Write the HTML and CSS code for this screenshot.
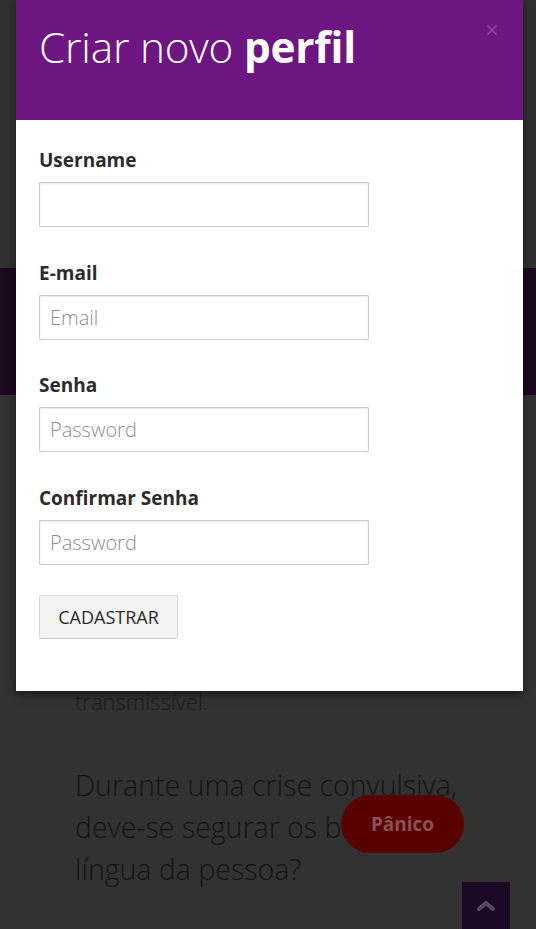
FILE: index.html
```html
<!DOCTYPE html>
<html lang="pt">
<head>
<meta charset="utf-8">
<title>Criar novo perfil</title>
<link rel="stylesheet" href="styles.css">
</head>
<body>
<div class="page">
  <div class="topbar"></div>
  <div class="band"></div>
  <section class="content">
    <p class="answer">transmissível.</p>
    <h3 class="question">Durante uma crise convulsiva, deve-se segurar os braços e a língua da pessoa?</h3>
  </section>
</div>

<button class="panic" type="button">Pânico</button>
<a class="to-top" href="#">
  <svg width="22" height="14" viewBox="0 0 22 14"><path d="M4 11 L11 5 L18 11" fill="none" stroke="#5a4a60" stroke-width="4" stroke-linecap="round" stroke-linejoin="round"/></svg>
</a>

<div class="modal">
  <div class="modal-header">
    <h2 class="modal-title">Criar novo <strong>perfil</strong></h2>
    <button class="close" type="button" aria-label="Fechar">
      <svg width="12" height="12" viewBox="0 0 12 12"><path d="M1.5 1.5 L10.5 10.5 M10.5 1.5 L1.5 10.5" stroke="#8c4c9b" stroke-width="1.5"/></svg>
    </button>
  </div>
  <form class="modal-body">
    <div class="group">
      <label class="label">Username</label>
      <input class="field" type="text">
    </div>
    <div class="group">
      <label class="label">E-mail</label>
      <input class="field" type="email" placeholder="Email">
    </div>
    <div class="group">
      <label class="label">Senha</label>
      <input class="field" type="password" placeholder="Password">
    </div>
    <div class="group">
      <label class="label">Confirmar Senha</label>
      <input class="field" type="password" placeholder="Password">
    </div>
    <button class="submit" type="button">CADASTRAR</button>
  </form>
</div>
</body>
</html>
```

FILE: styles.css
```css
* { box-sizing: border-box; }
html, body {
  margin: 0;
  padding: 0;
  height: 100%;
  overflow: hidden;
}
body {
  background: #323232;
  font-family: "Open Sans", "Liberation Sans", sans-serif;
  position: relative;
}
.page {
  display: flex;
  flex-direction: column;
}
.topbar {
  height: 268px;
  background: #313131;
}
.band {
  height: 127px;
  background: #1b0a1e;
}
.content {
  padding: 0 60px 0 75px;
  color: #1c1c1c;
}
.answer {
  margin: 291px 0 0;
  font-size: 22px;
  font-weight: 300;
  line-height: 30px;
}
.question {
  margin: 48px 0 0;
  font-size: 28.5px;
  font-weight: 300;
  line-height: 42px;
  color: #151515;
}

.panic {
  position: absolute;
  left: 341px;
  top: 795px;
  width: 123px;
  height: 58px;
  border: none;
  border-radius: 29px;
  background: #590202;
  color: #8a5252;
  font-family: "Open Sans", "Liberation Sans", sans-serif;
  font-weight: 700;
  font-size: 19px;
  padding: 0;
}
.to-top {
  position: absolute;
  left: 462px;
  top: 882px;
  width: 48px;
  height: 52px;
  background: #1c0923;
  display: flex;
  justify-content: center;
  padding-top: 16px;
}

.modal {
  position: absolute;
  left: 16px;
  top: 0;
  width: 507px;
  height: 691px;
  background: #fff;
  box-shadow: 0 3px 8px rgba(0, 0, 0, 0.55);
}
.modal-header {
  height: 120px;
  background: #6d1580;
  position: relative;
  padding: 19px 23px 0;
}
.modal-title {
  margin: 0;
  color: #fff;
  font-size: 42.3px;
  font-weight: 300;
  line-height: 56px;
  letter-spacing: -0.2px;
}
.modal-title strong {
  font-weight: 700;
}
.close {
  position: absolute;
  top: 23px;
  right: 24px;
  width: 14px;
  height: 14px;
  padding: 0;
  border: none;
  background: transparent;
  display: flex;
  align-items: center;
  justify-content: center;
}
.modal-body {
  display: flex;
  flex-direction: column;
  align-items: flex-start;
  padding: 27px 23px 0;
}
.group {
  display: flex;
  flex-direction: column;
  margin-bottom: 32.5px;
}
.label {
  font-size: 19px;
  font-weight: 700;
  color: #2b2b2b;
  line-height: 26px;
  margin-bottom: 9px;
}
.field {
  width: 330px;
  height: 45px;
  border: 1px solid #cccccc;
  border-radius: 1px;
  box-shadow: inset 0 1px 2px rgba(0, 0, 0, 0.1);
  padding: 0 10px;
  font-family: "Open Sans", "Liberation Sans", sans-serif;
  font-size: 20px;
  font-weight: 300;
  color: #555;
  background: #fff;
  outline: none;
}
.field::placeholder {
  color: #8e8e8e;
}
.submit {
  margin-top: -2.5px;
  width: 139px;
  height: 44px;
  background: #f4f4f4;
  border: 1px solid #d6d6d6;
  border-bottom-color: #c4c4c4;
  border-radius: 2px;
  font-family: "Open Sans", "Liberation Sans", sans-serif;
  font-size: 18px;
  color: #2b2b2b;
  padding: 0;
}
```
